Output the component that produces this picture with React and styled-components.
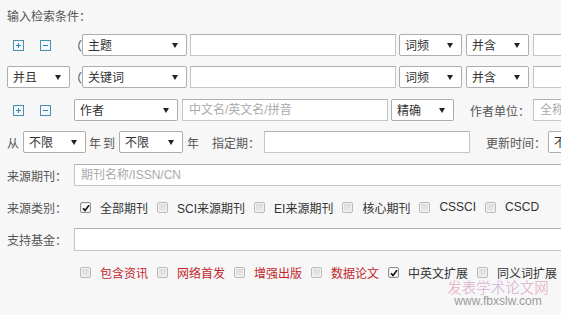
import React from "react";
import styled, { createGlobalStyle } from "styled-components";

const GlobalStyle = createGlobalStyle`
  html, body {
    margin: 0;
    padding: 0;
    background: #f7f7f7;
    overflow: hidden;
  }
  body {
    font-family: "Liberation Sans", "Noto Sans CJK SC", sans-serif;
    font-size: 12px;
    color: #333;
  }
`;

const Page = styled.div`
  position: relative;
  width: 561px;
  height: 315px;
  padding: 6px 0 0 7px;
  box-sizing: border-box;
  overflow: hidden;
`;

const Title = styled.div`
  height: 22px;
  line-height: 22px;
  color: #555;
`;

const Row = styled.div`
  display: flex;
  align-items: center;
  height: ${(p) => p.$h || 22}px;
  margin-top: ${(p) => p.$mt}px;
  white-space: nowrap;
`;

const IconCell = styled.div`
  display: flex;
  align-items: center;
  width: ${(p) => p.$w}px;
  flex-shrink: 0;
  padding-left: 6px;
  gap: 16px;
  box-sizing: border-box;
`;

const Paren = styled.span`
  width: 12px;
  flex-shrink: 0;
  font-family: "Noto Sans CJK SC", sans-serif;
  color: #444;
`;

const SelectBox = styled.div`
  position: relative;
  flex-shrink: 0;
  width: ${(p) => p.$w}px;
  height: 22px;
  margin-left: ${(p) => p.$ml || 0}px;
  box-sizing: border-box;
  border: 1px solid #adadad;
  border-radius: 2px;
  background: #fff;
  padding-left: 5px;
  line-height: 20px;
  color: #333;
  font-family: "Noto Sans CJK SC", sans-serif;
  &::after {
    content: "";
    position: absolute;
    right: 8px;
    top: 8px;
    border-left: 3px solid transparent;
    border-right: 3px solid transparent;
    border-top: 5px solid #222;
  }
`;

const TextInput = styled.div`
  flex-shrink: 0;
  width: ${(p) => p.$w}px;
  height: ${(p) => p.$h || 22}px;
  margin-left: ${(p) => p.$ml || 0}px;
  box-sizing: border-box;
  border: 1px solid #c6c6c6;
  border-top-color: #b0b0b0;
  background: #fff;
  padding-left: 6px;
  line-height: ${(p) => (p.$h || 22) - 2}px;
  color: #aaa;
`;

const Label = styled.span`
  flex-shrink: 0;
  margin-left: ${(p) => p.$ml || 0}px;
  color: #555;
  font-family: "Noto Sans CJK SC", sans-serif;
`;

const CheckItem = styled.span`
  display: inline-flex;
  align-items: center;
  margin-left: ${(p) => p.$ml ?? 9}px;
  flex-shrink: 0;
`;

const Box = styled.span`
  position: relative;
  width: 11px;
  height: 11px;
  box-sizing: border-box;
  border: 1px solid ${(p) => (p.$on ? "#8f8f8f" : "#b9b9b9")};
  border-radius: 2px;
  background: ${(p) =>
    p.$on ? "#fdfdfd" : "linear-gradient(#d9d9d9, #ededed)"};
  box-shadow: inset 0 0 0 1px ${(p) => (p.$on ? "#eee" : "#f4f4f4")};
  margin-right: 9px;
  svg {
    position: absolute;
    left: 1px;
    top: 1px;
  }
`;

const CheckText = styled.span`
  color: ${(p) => (p.$red ? "#c2262d" : "#333")};
`;

const Watermark = styled.div`
  position: absolute;
  left: 447px;
  top: 278px;
  text-align: center;
  width: 102px;
  pointer-events: none;
`;

const WmTitle = styled.div`
  font-family: "Noto Sans CJK SC", sans-serif;
  font-size: 14.5px;
  line-height: 17px;
  background: linear-gradient(90deg, #e8b6c9, #d6bfe0 50%, #e9b7c4);
  -webkit-background-clip: text;
  background-clip: text;
  color: transparent;
`;

const WmUrl = styled.div`
  font-family: "Liberation Sans", sans-serif;
  font-size: 12px;
  line-height: 12px;
  color: #9a9a9a;
`;

function PlusMinus({ minus }) {
  return (
    <svg width="11" height="11" viewBox="0 0 11 11">
      <rect x="0.5" y="0.5" width="10" height="10" fill="#f2f8fb" stroke="#4d8fae" />
      <path d="M3 5.5h5" stroke="#3f7f9f" strokeWidth="1" />
      {!minus && <path d="M5.5 3v5" stroke="#3f7f9f" strokeWidth="1" />}
    </svg>
  );
}

function Check({ on, red, text, ml }) {
  return (
    <CheckItem $ml={ml}>
      <Box $on={on}>
        {on && (
          <svg width="8" height="8" viewBox="0 0 8 8">
            <path d="M1 4.2l2 2.2L7 1.2" fill="none" stroke="#111" strokeWidth="1.6" />
          </svg>
        )}
      </Box>
      <CheckText $red={red}>{text}</CheckText>
    </CheckItem>
  );
}

function TermRow({ mt, first, field }) {
  return (
    <Row $mt={mt}>
      {first ? (
        <IconCell $w={63}>
          <PlusMinus />
          <PlusMinus minus />
        </IconCell>
      ) : (
        <SelectBox $w={63}>并且</SelectBox>
      )}
      <Paren>（</Paren>
      <SelectBox $w={105}>{field}</SelectBox>
      <TextInput $w={206} $ml={3} />
      <SelectBox $w={63} $ml={3}>词频</SelectBox>
      <SelectBox $w={63} $ml={4}>并含</SelectBox>
      <TextInput $w={100} $ml={4} />
    </Row>
  );
}

const sources = [
  { text: "全部期刊", on: true },
  { text: "SCI来源期刊" },
  { text: "EI来源期刊" },
  { text: "核心期刊" },
  { text: "CSSCI" },
  { text: "CSCD" },
];

const extras = [
  { text: "包含资讯", red: true },
  { text: "网络首发", red: true },
  { text: "增强出版", red: true },
  { text: "数据论文", red: true },
  { text: "中英文扩展", on: true },
  { text: "同义词扩展" },
];

export default function App() {
  return (
    <>
      <GlobalStyle />
      <Page>
        <Title>输入检索条件：</Title>
        <TermRow mt={6} first field="主题" />
        <TermRow mt={10} field="关键词" />
        <Row $mt={11}>
          <IconCell $w={67}>
            <PlusMinus />
            <PlusMinus minus />
          </IconCell>
          <SelectBox $w={104}>作者</SelectBox>
          <TextInput $w={206} $ml={4}>中文名/英文名/拼音</TextInput>
          <SelectBox $w={63} $ml={3}>精确</SelectBox>
          <Label $ml={16}>作者单位：</Label>
          <TextInput $w={100} $ml={3}>全称</TextInput>
        </Row>
        <Row $mt={10}>
          <Label>从</Label>
          <SelectBox $w={63} $ml={4}>不限</SelectBox>
          <Label $ml={3}>年</Label>
          <Label $ml={2}>到</Label>
          <SelectBox $w={64} $ml={4}>不限</SelectBox>
          <Label $ml={4}>年</Label>
          <Label $ml={13}>指定期：</Label>
          <TextInput $w={206} $ml={4} />
          <Label $ml={16}>更新时间：</Label>
          <SelectBox $w={80} $ml={2}>不限</SelectBox>
        </Row>
        <Row $mt={11}>
          <Label>来源期刊：</Label>
          <TextInput $w={600} $ml={7}>期刊名称/ISSN/CN</TextInput>
        </Row>
        <Row $mt={10}>
          <Label>来源类别：</Label>
          {sources.map((s, i) => (
            <Check key={s.text} {...s} ml={i === 0 ? 13 : 9} />
          ))}
        </Row>
        <Row $mt={10} $h={23}>
          <Label>支持基金：</Label>
          <TextInput $w={600} $h={23} $ml={7} />
        </Row>
        <Row $mt={10}>
          {extras.map((s, i) => (
            <Check key={s.text} {...s} ml={i === 0 ? 73 : 9} />
          ))}
        </Row>
        <Watermark>
          <WmTitle>发表学术论文网</WmTitle>
          <WmUrl>www.fbxslw.com</WmUrl>
        </Watermark>
      </Page>
    </>
  );
}
